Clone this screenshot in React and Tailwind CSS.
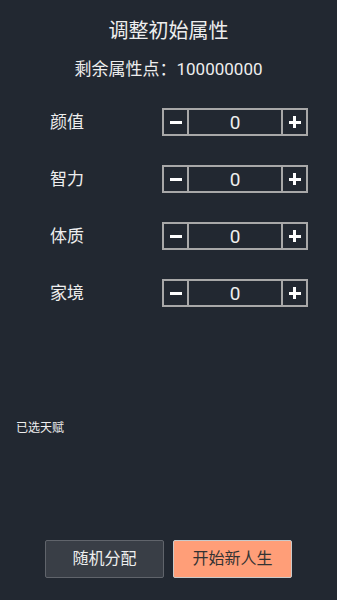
import React from 'react'

const ATTRS = ['颜值', '智力', '体质', '家境']

function Stepper({ value }) {
  return (
    <div className="flex h-[28px] w-[146px] border-2 border-[#a8a8a8]">
      <div className="flex w-[25px] items-center justify-center border-r-2 border-[#a8a8a8]">
        <div className="h-[3px] w-[12px] bg-white" />
      </div>
      <div className="flex flex-1 items-center justify-center text-[19px] leading-none text-[#eeeeee]">
        {value}
      </div>
      <div className="relative flex w-[25px] items-center justify-center border-l-2 border-[#a8a8a8]">
        <div className="h-[3px] w-[12px] bg-white" />
        <div className="absolute h-[12px] w-[3px] bg-white" />
      </div>
    </div>
  )
}

export default function App() {
  return (
    <div
      className="flex h-[600px] w-[337px] flex-col bg-[#222831] text-[#eeeeee]"
      style={{ fontFamily: 'Roboto, "Noto Sans CJK SC", sans-serif' }}
    >
      <h1 className="mt-[19px] text-center text-[20px] leading-[24px]">调整初始属性</h1>
      <p className="mt-[15px] text-center text-[17px] leading-[22px]">剩余属性点：100000000</p>

      <div className="mt-[28px] flex flex-col gap-[29px]">
        {ATTRS.map((name) => (
          <div key={name} className="flex items-center">
            <span className="w-[162px] pl-[50px] text-[17px] leading-[22px]">{name}</span>
            <Stepper value={0} />
          </div>
        ))}
      </div>

      <p className="mt-[113px] pl-[16px] text-[12px] leading-[16px]">已选天赋</p>

      <div className="mt-auto mb-[22px] flex justify-center gap-[9px]">
        <button className="h-[38px] w-[119px] rounded-[2px] border border-[#60646b] bg-[#393e46] text-[16px] text-[#eeeeee]">
          随机分配
        </button>
        <button className="h-[38px] w-[119px] rounded-[2px] border border-[#c9c9c9] bg-[#ff9e78] text-[16px] text-[#333333]">
          开始新人生
        </button>
      </div>
    </div>
  )
}
